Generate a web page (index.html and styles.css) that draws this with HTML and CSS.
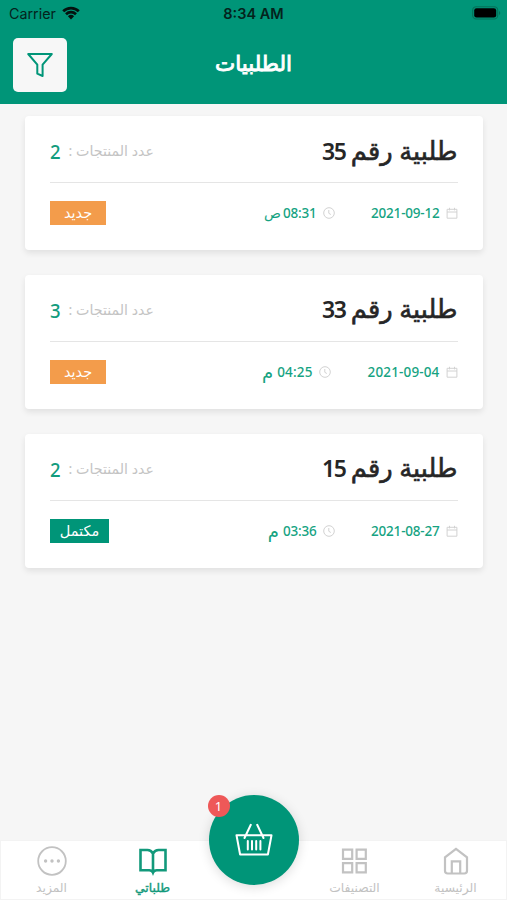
FILE: index.html
```html
<!DOCTYPE html>
<html lang="ar" dir="rtl">
<head>
<meta charset="utf-8">
<title>الطلبيات</title>
<link rel="stylesheet" href="styles.css">
</head>
<body>
<svg class="defs" aria-hidden="true">
  <symbol id="calendar" viewBox="0 0 12 12"><path d="M1.1 2.3h9.8v8.9H1.1zM1.1 5h9.8M3.5.8v2.6M8.5.8v2.6"/></symbol>
  <symbol id="clock" viewBox="0 0 12 12"><circle cx="6" cy="6" r="5.3"/><path d="M5.8 3v3.3l2 1.2"/></symbol>
</svg>
<div class="app">
  <header class="header">
    <div class="status" dir="ltr">
      <div class="carrier"><span>Carrier</span>
        <svg class="wifi" viewBox="0 0 18 14"><path d="M1.2 5.2a11.2 11.2 0 0 1 15.6 0M4 8.2a7.2 7.2 0 0 1 10 0" fill="none" stroke="#04120f" stroke-width="2.7"/><path d="M9 13.4 5.9 10.2a4.5 4.5 0 0 1 6.2 0z" fill="#04120f"/></svg>
      </div>
      <div class="time">8:34 AM</div>
      <svg class="battery" viewBox="0 0 29 14"><rect x=".7" y=".7" width="25" height="12.3" rx="3.6" fill="none" stroke="#047158" stroke-width="1.1"/><rect x="2.2" y="2.3" width="22" height="9.2" rx="2.3" fill="#000"/><path d="M27 5a2.2 2.2 0 0 1 0 4z" fill="#047158"/></svg>
    </div>
    <div class="bar" dir="ltr">
      <div class="filter"><svg viewBox="0 0 28 26"><path d="M2.2 2h23.6l-9.2 10.6V24l-5.3-2.3v-9.1z"/></svg></div>
      <h1>الطلبيات</h1>
    </div>
  </header>

  <main class="orders">
    <article class="card">
      <div class="top"><h2><span>طلبية رقم</span><b>35</b></h2>
        <div class="count"><span class="label">عدد المنتجات :</span><span class="num">2</span></div></div>
      <div class="bottom">
        <div class="date"><svg class="ico"><use href="#calendar"/></svg><span>2021-09-12</span></div>
        <div class="hour"><svg class="ico"><use href="#clock"/></svg><span class="digits">08:31</span><span class="ampm sad">ص</span></div>
        <div class="tag new">جديد</div>
      </div>
    </article>
    <article class="card">
      <div class="top"><h2><span>طلبية رقم</span><b>33</b></h2>
        <div class="count"><span class="label">عدد المنتجات :</span><span class="num">3</span></div></div>
      <div class="bottom wide">
        <div class="date"><svg class="ico"><use href="#calendar"/></svg><span>2021-09-04</span></div>
        <div class="hour"><svg class="ico"><use href="#clock"/></svg><span class="digits">04:25</span><span class="ampm">م</span></div>
        <div class="tag new">جديد</div>
      </div>
    </article>
    <article class="card">
      <div class="top"><h2><span>طلبية رقم</span><b>15</b></h2>
        <div class="count"><span class="label">عدد المنتجات :</span><span class="num">2</span></div></div>
      <div class="bottom">
        <div class="date"><svg class="ico"><use href="#calendar"/></svg><span>2021-08-27</span></div>
        <div class="hour"><svg class="ico"><use href="#clock"/></svg><span class="digits">03:36</span><span class="ampm">م</span></div>
        <div class="tag done">مكتمل</div>
      </div>
    </article>
  </main>

  <nav class="tabs">
    <div class="tab"><svg viewBox="0 0 30 30"><path d="M15 2.8 4 11.4v13.4q0 2.7 2.7 2.7h16.6q2.7 0 2.7-2.7V11.4zM10.8 27V15.4h8.4V27"/></svg><span>الرئيسية</span></div>
    <div class="tab"><svg viewBox="0 0 30 30"><path d="M3 3.6h9.2v9.2H3zM16.6 3.6h9.2v9.2h-9.2zM3 17.2h9.2v9.2H3zM16.6 17.2h9.2v9.2h-9.2z"/></svg><span>التصنيفات</span></div>
    <div class="tab basket">
      <div class="fab"><svg viewBox="0 0 38 34"><path d="M1.5 12.2h35l-3.6 19.3H5.1zM15.8 1.8 9.5 15M22.2 1.8 28.5 15M12.8 18v8.6M17 18v8.6M21.2 18v8.6M25.4 18v8.6"/></svg><i class="badge">1</i></div>
    </div>
    <div class="tab active"><svg viewBox="0 0 30 30"><path d="M15 7.5Q13 4 9.5 4h-7v20.2h8.7q2.8 0 3.8 2.4 1-2.4 3.8-2.4h8.7V4h-7Q17 4 15 7.5zM15 7.5v19"/></svg><span>طلباتي</span></div>
    <div class="tab"><svg class="more" viewBox="0 0 30 30"><circle cx="15" cy="15" r="13.8"/><path class="dots" d="M8.6 15h.01M15 15h.01M21.4 15h.01"/></svg><span>المزيد</span></div>
  </nav>
</div>
</body>
</html>
```
FILE: styles.css
```css
* { box-sizing: border-box; }
body { margin: 0; background: #f6f6f6; font-family: "Noto Sans", "DejaVu Sans", sans-serif; }
.defs { position: absolute; width: 0; height: 0; }
.app { width: 507px; height: 900px; display: flex; flex-direction: column; overflow: hidden; }

.header { height: 103.5px; background: #009578; flex: none; }
.status { height: 28px; display: grid; grid-template-columns: 1fr auto 1fr; align-items: center; padding: 0 6px 0 9px; font: 14.3px/28px Inter, sans-serif; color: #04231c; }
.carrier { display: flex; align-items: center; gap: 6px; }
.wifi { width: 18px; height: 14px; margin-top: -2px; }
.time { font-weight: 600; font-size: 14.5px; margin-left: -3px; }
.battery { width: 29px; height: 14px; justify-self: end; margin-top: -2px; }
.bar { display: grid; grid-template-columns: 54px 1fr 54px; padding: 9.5px 13px 0; }
.filter { width: 54px; height: 54px; border-radius: 5px; background: #f7f7f7; display: flex; align-items: center; justify-content: center; }
.filter svg { width: 28px; height: 26px; fill: none; stroke: #009578; stroke-width: 2; stroke-linejoin: round; }
h1 { margin: 0; color: #fff; font-size: 21.5px; font-weight: 400; -webkit-text-stroke: .9px #fff; line-height: 50px; text-align: center; }

.orders { flex: 1; display: flex; flex-direction: column; gap: 24.5px; padding: 12.5px 24.5px 0 25px; }
.card { height: 134.3px; background: #fff; border-radius: 4px; padding: 0 25px; box-shadow: 0 3px 6px rgba(0,0,0,.09); }
.top { height: 67px; display: flex; align-items: center; justify-content: space-between; border-bottom: 1.5px solid #e5e5e5; padding-top: 3px; }
h2 { margin: 0; display: flex; align-items: baseline; gap: 5px; font-size: 25.7px; font-weight: 400; color: #262626; line-height: 36px; }
h2 span { -webkit-text-stroke: .6px #262626; }
h2 b { font-weight: 600; font-size: 23px; letter-spacing: -1.2px; }
.count { display: flex; align-items: center; gap: 8px; }
.label { color: #c4c4c4; font-size: 14.2px; white-space: nowrap; }
.num { color: #129c7d; font-size: 18.5px; font-weight: 500; transform: scaleY(1.1); }
.bottom { height: 60px; display: flex; align-items: center; color: #16a382; font-size: 13.5px; font-weight: 500; letter-spacing: -.2px; }
.ico { width: 12px; height: 12px; fill: none; stroke: #d2d2d2; stroke-width: 1; }
.date, .hour { display: flex; align-items: center; }
.date { gap: 6px; width: 123px; }
.hour { width: 90px; }
.digits { margin-right: 6px; }
.ampm { margin-right: 4px; font-size: 18px; line-height: 20px; }
.sad { font-size: 14px; margin-right: 2px; }
.wide { letter-spacing: .15px; }
.wide .date { width: 127px; }
.tag { height: 24px; margin-right: auto; display: flex; align-items: center; justify-content: center; color: #fff; font-size: 14.5px; letter-spacing: 0; padding-bottom: 2px; }
.new { width: 56px; background: #f39c4b; }
.done { width: 59px; background: #009578; }

.tabs { height: 60px; flex: none; display: grid; grid-template-columns: repeat(5, 1fr); background: #fff; border: 1px solid #f3f3f3; }
.tab { display: flex; flex-direction: column; align-items: center; padding-top: 5px; color: #c2c2c2; font-size: 12.3px; line-height: 24px; white-space: nowrap; }
.tab > svg { width: 30px; height: 30px; flex: none; fill: none; stroke: currentColor; stroke-width: 2.2; }
.tab > .more { stroke-width: 1.8; }
.more .dots { stroke-width: 3.4; stroke-linecap: round; }
.active { color: #12997b; }
.active > span { -webkit-text-stroke: .4px #12997b; }
.active > svg { stroke-width: 2.6; }
.basket { padding: 0; }
.fab { position: relative; flex: none; width: 90px; height: 90px; margin-top: -46px; border-radius: 50%; background: #009578; box-shadow: 0 2px 12px rgba(0,0,0,.14); display: flex; align-items: center; justify-content: center; }
.fab svg { width: 38px; height: 34px; fill: none; stroke: #fff; stroke-width: 2; stroke-linecap: round; stroke-linejoin: round; }
.badge { position: absolute; left: -1px; top: 0; width: 22px; height: 22px; border-radius: 50%; background: #ee5858; color: #fff; font-size: 13px; font-style: normal; text-align: center; line-height: 22px; }
```
